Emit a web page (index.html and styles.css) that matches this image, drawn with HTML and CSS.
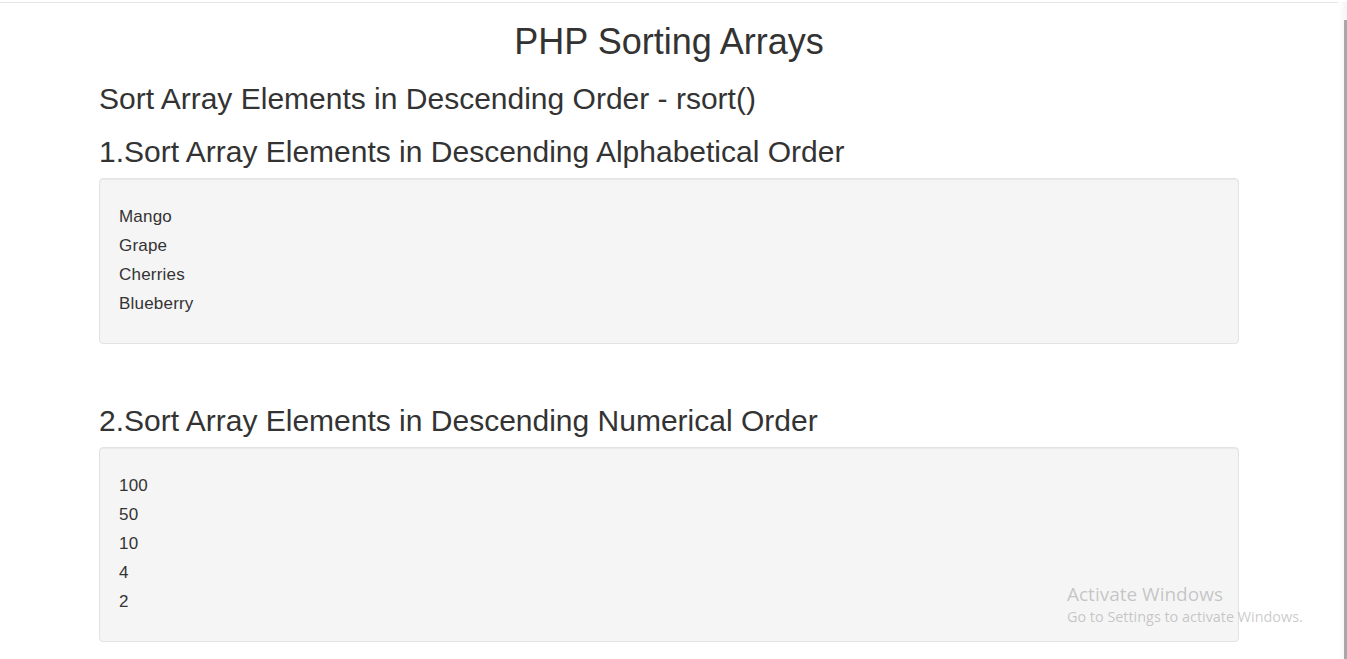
FILE: index.html
```html
<!DOCTYPE html>
<html lang="en">
<head>
<meta charset="utf-8">
<title>PHP Sorting Arrays</title>
<link rel="stylesheet" href="styles.css">
</head>
<body>
<div class="window">
  <div class="page">
    <div class="container">
      <h1 class="title">PHP Sorting Arrays</h1>
      <h2 class="heading">Sort Array Elements in Descending Order - rsort()</h2>
      <h2 class="heading">1.Sort Array Elements in Descending Alphabetical Order</h2>
      <div class="well">
        <div class="item">Mango</div>
        <div class="item">Grape</div>
        <div class="item">Cherries</div>
        <div class="item">Blueberry</div>
      </div>
      <div class="spacer"></div>
      <h2 class="heading">2.Sort Array Elements in Descending Numerical Order</h2>
      <div class="well">
        <div class="item">100</div>
        <div class="item">50</div>
        <div class="item">10</div>
        <div class="item">4</div>
        <div class="item">2</div>
      </div>
    </div>
  </div>
  <div class="scrollbar"><div class="thumb"></div></div>
</div>
<div class="activate">
  <div class="activate-title">Activate Windows</div>
  <div class="activate-sub">Go to Settings to activate Windows.</div>
</div>
</body>
</html>
```
FILE: styles.css
```css
html, body {
  margin: 0;
  padding: 0;
  background: #ffffff;
  height: 100%;
  overflow: hidden;
}
body {
  font-family: "Liberation Sans", Arial, sans-serif;
  color: #333333;
  font-size: 14px;
  line-height: 20px;
}
.window {
  display: flex;
  height: 659px;
  padding-top: 2px;
  box-sizing: border-box;
}
.page {
  flex: 1;
  border-top: 1px solid #e6e6e6;
  min-width: 0;
}
.scrollbar {
  width: 9px;
  display: flex;
  justify-content: flex-end;
  padding-top: 18px;
  background: linear-gradient(to right, #ffffff, #f4f4f4);
}
.thumb {
  width: 3px;
  background: #a8a8a8;
  height: 100%;
}
.container {
  width: 1140px;
  margin: 0 auto;
  padding: 0 15px;
}
.title {
  font-size: 36px;
  font-weight: 500;
  line-height: 1.1;
  margin: 19px 0 10px;
  text-align: center;
}
.heading {
  font-size: 30px;
  font-weight: 500;
  line-height: 1.1;
  margin: 20px 0 10px;
}
.well {
  background: #f5f5f5;
  border: 1px solid #e3e3e3;
  border-radius: 4px;
  box-shadow: inset 0 1px 1px rgba(0, 0, 0, 0.05);
  padding: 23px 19px 25px;
  margin-bottom: 20px;
}
.item {
  font-size: 17px;
  line-height: 29px;
  letter-spacing: 0.2px;
}
.spacer {
  height: 20px;
}
.activate {
  position: absolute;
  left: 1067px;
  top: 583px;
  font-family: "Open Sans", "Noto Sans", sans-serif;
  color: rgba(150, 150, 150, 0.5);
}
.activate-title {
  font-size: 19px;
  line-height: 23px;
}
.activate-sub {
  font-size: 14.4px;
  line-height: 22px;
}
```
